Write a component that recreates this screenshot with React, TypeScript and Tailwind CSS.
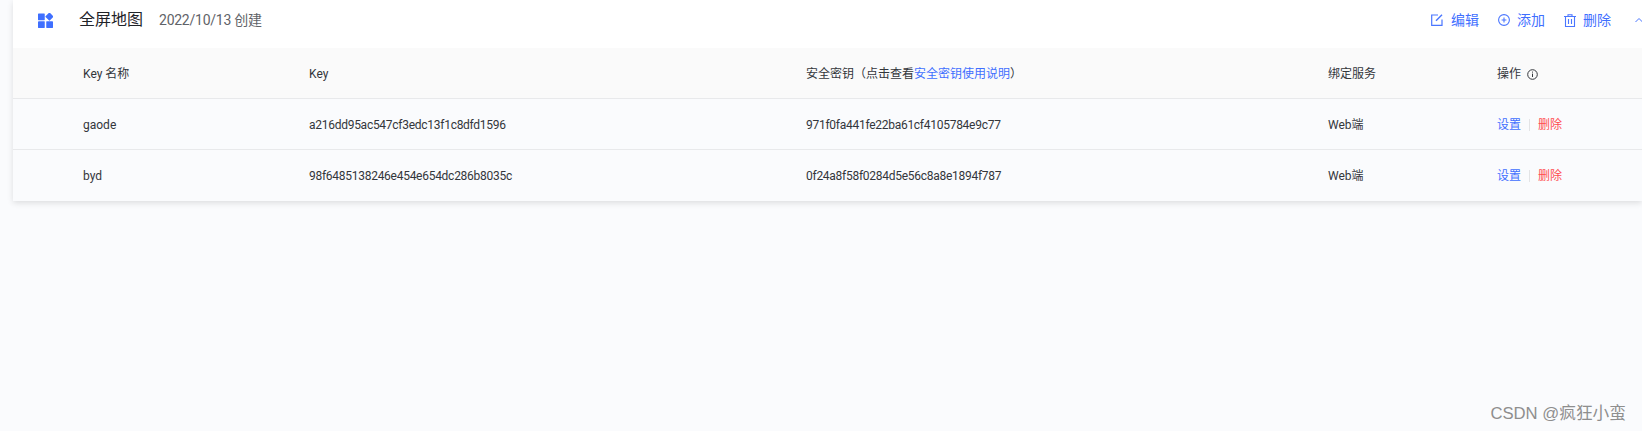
import React from "react";

const font = { fontFamily: 'Roboto, "Noto Sans CJK SC", sans-serif' };

function Row({ a, b, c }: { a: string; b: string; c: string }) {
  return (
    <div className="grid grid-cols-[226px_497px_522px_169px_1fr] pl-[70px] h-[51px] pt-[1px] items-center border-b border-[#e8e9eb] last:border-b-0 bg-[#fafbfd] text-xs text-[#33363b]">
      <div>{a}</div>
      <div className="tracking-[-0.27px]">{b}</div>
      <div className="tracking-[-0.27px]">{c}</div>
      <div>Web端</div>
      <div className="flex items-center">
        <span className="text-[#3f6fff]">设置</span>
        <span className="w-px h-[12px] bg-[#e3e4e6] mx-[8px]" />
        <span className="text-[#ff4d4f]">删除</span>
      </div>
    </div>
  );
}

export default function App() {
  return (
    <div style={font} className="w-[1642px] h-[431px] bg-[#fafbfd] overflow-hidden relative pl-[13px]">
      <div className="bg-white shadow-[0_2px_6px_rgba(0,0,0,0.12)]">
        <div className="h-[48px] flex items-center pl-[25px] pb-[8px]">
          <svg width="15" height="15" viewBox="0 0 16 16" fill="#3f6fff">
            <rect x="0" y="0.5" width="7.200" height="7.200" rx="0.5" />
            <rect x="0" y="8.800" width="7.200" height="7.200" rx="0.5" />
            <rect x="8.800" y="8.800" width="7.200" height="7.200" rx="0.5" />
            <rect x="9" y="0.600" width="6.400" height="6.400" rx="0.5" transform="rotate(45 12.2 3.8)" />
          </svg>
          <span className="ml-[26px] text-base text-[#1f2329]">全屏地图</span>
          <span className="ml-[16px] text-sm tracking-[-0.25px] text-[#5f6368]">2022/10/13 创建</span>
          <div className="ml-auto flex items-center text-sm text-[#3f6fff]">
            <svg width="12" height="12" viewBox="0 0 12 12" fill="none" stroke="#4a76ff" strokeWidth="1.2">
              <path d="M7 1H.7v10.300H11V5.500" />
              <path d="M5 6.800 11 .8" strokeWidth="1.4" />
            </svg>
            <span className="ml-[8px]">编辑</span>
            <svg className="ml-[19px]" width="12" height="12" viewBox="0 0 12 12" fill="none" stroke="#4a76ff" strokeWidth="1.1">
              <circle cx="6" cy="6" r="5.4" />
              <path d="M3.600 6h4.800M6 3.600v4.800" />
            </svg>
            <span className="ml-[7px]">添加</span>
            <svg className="ml-[19px]" width="12" height="13" viewBox="0 0 12 13" fill="none" stroke="#4a76ff" strokeWidth="1.1">
              <path d="M0 2.500h12M4 2.500V.7h4v1.800M1.500 2.500v10h9v-10M4.500 5v5M7.500 5v5" />
            </svg>
            <span className="ml-[7px]">删除</span>
            <svg className="ml-[24px] mr-[-1px]" width="8" height="6" viewBox="0 0 8 6" fill="none" stroke="#4a76ff" strokeWidth="1">
              <path d="M.5 5 4 1.500 7.500 5" />
            </svg>
          </div>
        </div>
        <div className="grid grid-cols-[226px_497px_522px_169px_1fr] pl-[70px] h-[51px] pt-[2px] items-center border-b border-[#e8e9eb] bg-[#fafafa] text-xs text-[#33363b]">
          <div>Key 名称</div>
          <div>Key</div>
          <div>
            安全密钥（点击查看<span className="text-[#3f6fff]">安全密钥使用说明</span>）
          </div>
          <div>绑定服务</div>
          <div className="flex items-center gap-[6px]">
            操作
            <svg width="11" height="11" viewBox="0 0 11 11" fill="none" stroke="#33363b" strokeWidth="1">
              <circle cx="5.500" cy="5.500" r="4.800" />
              <path d="M5.500 4.600v3.400M5.500 2.600v1" />
            </svg>
          </div>
        </div>
        <Row a="gaode" b="a216dd95ac547cf3edc13f1c8dfd1596" c="971f0fa441fe22ba61cf4105784e9c77" />
        <Row a="byd" b="98f6485138246e454e654dc286b8035c" c="0f24a8f58f0284d5e56c8a8e1894f787" />
      </div>
      <div className="absolute right-[16px] bottom-[5px] text-[16.7px] text-[#8e8e8e]" style={{ fontFamily: '"Liberation Sans", "Noto Sans CJK SC", sans-serif' }}>
        CSDN @疯狂小蛮
      </div>
    </div>
  );
}
